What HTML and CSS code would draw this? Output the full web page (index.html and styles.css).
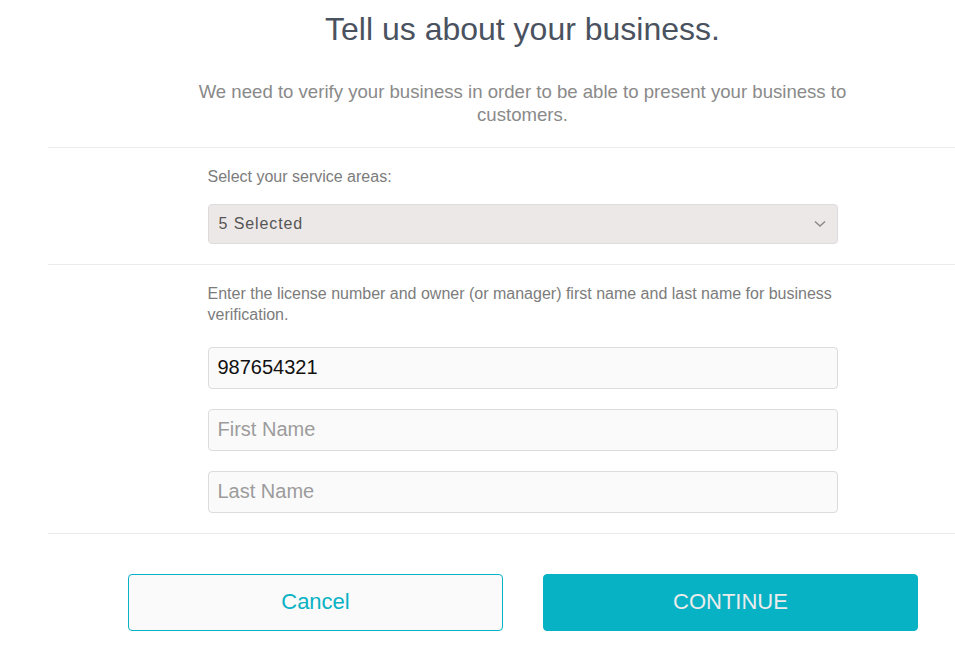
FILE: index.html
```html
<!DOCTYPE html>
<html>
<head>
<meta charset="utf-8">
<link rel="stylesheet" href="styles.css">
</head>
<body>
<div class="page">
  <header class="intro">
    <h1 class="title">Tell us about your business.</h1>
    <p class="subtitle">We need to verify your business in order to be able to present your business to customers.</p>
  </header>
  <section class="section">
    <div class="inner">
      <p class="label">Select your service areas:</p>
      <div class="select">
        <span class="select-text">5 Selected</span>
        <svg class="chevron" width="12" height="8" viewBox="0 0 12 8"><path d="M1 1.5 L6 6 L11 1.5" fill="none" stroke="#8a8a8a" stroke-width="1.5"/></svg>
      </div>
    </div>
  </section>
  <section class="section">
    <div class="inner">
      <p class="label">Enter the license number and owner (or manager) first name and last name for business verification.</p>
      <div class="fields">
        <input class="field" type="text" value="987654321">
        <input class="field" type="text" placeholder="First Name">
        <input class="field" type="text" placeholder="Last Name">
      </div>
    </div>
  </section>
  <div class="actions">
    <button class="btn btn-cancel">Cancel</button>
    <button class="btn btn-continue">CONTINUE</button>
  </div>
</div>
</body>
</html>
```
FILE: styles.css
```css
html, body {
  margin: 0;
  padding: 0;
  background: #fff;
  overflow: hidden;
}
body {
  font-family: "Liberation Sans", Arial, sans-serif;
}
.page {
  margin-left: 48px;
  width: 949px;
}
.intro {
  padding-top: 11px;
  padding-bottom: 21px;
  border-bottom: 1px solid #ececec;
  text-align: center;
}
.title {
  margin: 0;
  font-size: 32px;
  line-height: 36px;
  font-weight: normal;
  color: #4a5260;
}
.subtitle {
  margin: 33px auto 0;
  max-width: 670px;
  font-size: 18.6px;
  line-height: 23px;
  color: #8a8a8a;
}
.section {
  border-bottom: 1px solid #ececec;
  padding: 18px 0 20px;
}
.inner {
  width: 630px;
  margin: 0 auto;
}
.label {
  margin: 0;
  font-size: 16px;
  line-height: 21px;
  color: #7c7c7c;
}
.select {
  margin-top: 17px;
  height: 38px;
  border: 1px solid #dcdcdc;
  border-radius: 4px;
  background: #ece8e7;
  display: flex;
  align-items: center;
  justify-content: space-between;
  padding: 0 10px;
}
.select-text {
  font-size: 16px;
  color: #555;
  letter-spacing: 0.9px;
}
.chevron {
  margin-right: 1px;
}
.fields {
  margin-top: 22px;
  display: flex;
  flex-direction: column;
  gap: 20px;
}
.field {
  box-sizing: border-box;
  height: 42px;
  width: 100%;
  margin: 0;
  border: 1px solid #dcdcdc;
  border-radius: 4px;
  background: #fafafa;
  padding: 0 9px 2px;
  font-family: "Liberation Sans", Arial, sans-serif;
  font-size: 20px;
  color: #111;
  outline: none;
}
.field::placeholder {
  color: #9c9c9c;
}
.actions {
  margin-top: 40px;
  padding-left: 1px;
  display: flex;
  justify-content: center;
  gap: 40px;
}
.btn {
  box-sizing: border-box;
  width: 375px;
  height: 57px;
  padding-bottom: 3px;
  border-radius: 4px;
  font-family: "Liberation Sans", Arial, sans-serif;
  font-size: 22px;
  cursor: pointer;
}
.btn-cancel {
  background: #fafafa;
  border: 1px solid #07b2c4;
  color: #07b2c4;
}
.btn-continue {
  background: #07b2c4;
  border: 1px solid #07b2c4;
  color: #ececec;
}
```
